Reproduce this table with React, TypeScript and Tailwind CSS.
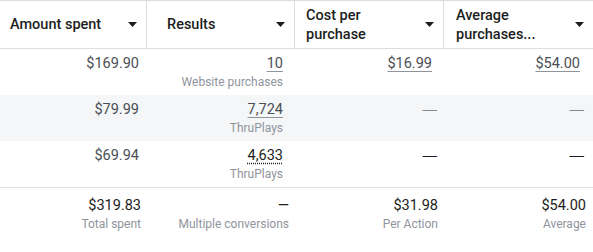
import React from "react";

type Cell = {
  value: string;
  sub?: string;
  line?: "solid" | "dotted";
  dash?: "light" | "dark";
};

const cols = [
  { title: ["Amount spent"], pl: "pl-[10px]" },
  { title: ["Results"], pl: "pl-[20px]" },
  { title: ["Cost per", "purchase"], pl: "pl-[11px]" },
  { title: ["Average", "purchases..."], pl: "pl-[12px]" },
];

const rows: { bg: string; cells: Cell[] }[] = [
  {
    bg: "bg-white",
    cells: [
      { value: "$169.90" },
      { value: "10", sub: "Website purchases", line: "solid" },
      { value: "$16.99", line: "solid" },
      { value: "$54.00", line: "solid" },
    ],
  },
  {
    bg: "bg-[#f5f6f7]",
    cells: [
      { value: "$79.99" },
      { value: "7,724", sub: "ThruPlays", line: "solid" },
      { value: "—", dash: "light" },
      { value: "—", dash: "light" },
    ],
  },
  {
    bg: "bg-white",
    cells: [
      { value: "$69.94" },
      { value: "4,633", sub: "ThruPlays", line: "dotted" },
      { value: "—", dash: "dark" },
      { value: "—", dash: "dark" },
    ],
  },
];

const totals = [
  { value: "$319.83", sub: "Total spent" },
  { value: "—", sub: "Multiple conversions" },
  { value: "$31.98", sub: "Per Action" },
  { value: "$54.00", sub: "Average" },
];

const pr = ["pr-[8px]", "pr-[12px]", "pr-[12px]", "pr-[13px]"];
const prDash = ["pr-[8px]", "pr-[8px]", "pr-[7px]", "pr-[9px]"];
const prTotal = ["pr-[6px]", "pr-[6px]", "pr-[6px]", "pr-[7px]"];

function Caret() {
  return (
    <svg width="9" height="5" viewBox="0 0 9 5" className="shrink-0">
      <path d="M0 0h9L4.5 5z" fill="#1c1e21" />
    </svg>
  );
}

function Value({ cell }: { cell: Cell }) {
  if (cell.dash)
    return (
      <span
        className={`font-['Liberation_Sans'] ${
          cell.dash === "light" ? "text-[#84898f]" : "text-[#1c1e21]"
        }`}
      >
        {cell.value}
      </span>
    );
  let cls = "text-[#4b4f56]";
  if (cell.line === "solid")
    cls = "text-[#4b4f56] underline decoration-[#90949c] underline-offset-[3px]";
  if (cell.line === "dotted")
    cls = "text-[#1c1e21] underline decoration-dotted decoration-[#1c1e21] underline-offset-[3px]";
  return <span className={cls}>{cell.value}</span>;
}

export default function App() {
  return (
    <div
      className="w-[593px] h-[252px] bg-white overflow-hidden"
      style={{ fontFamily: "Roboto, 'Noto Sans', sans-serif" }}
    >
      <div className="grid grid-cols-[147px_148px_149px_149px] border-t border-[#dadde1]">
        {/* header */}
        {cols.map((c, i) => (
          <div
            key={i}
            className={`h-[48px] flex items-center justify-between ${c.pl} pr-[9px] border-b border-[#dadde1] ${
              i < 3 ? "border-r" : ""
            } border-r-[#dadde1]`}
          >
            <div className="text-[14.5px] leading-[19px] font-medium text-[#1c1e21]">
              {c.title.map((t) => (
                <div key={t}>{t}</div>
              ))}
            </div>
            <Caret />
          </div>
        ))}

        {/* rows */}
        {rows.map((r, ri) =>
          r.cells.map((cell, ci) => (
            <div
              key={`${ri}-${ci}`}
              className={`${r.bg} h-[46px] ${cell.dash ? prDash[ci] : pr[ci]} pt-[5px] flex flex-col items-end ${
                ri === rows.length - 1 ? "border-b border-[#dadde1] h-[47px]" : ""
              }`}
            >
              <div className="text-[14.5px] leading-[19px]">
                <Value cell={cell} />
              </div>
              {cell.sub && (
                <div className="text-[12px] leading-[19px] text-[#90949c]">{cell.sub}</div>
              )}
            </div>
          ))
        )}

        {/* totals */}
        {totals.map((t, i) => (
          <div key={i} className={`${prTotal[i]} pt-[8px] flex flex-col items-end`}>
            <div className="text-[14.5px] leading-[19px] text-[#1c1e21]">{t.value}</div>
            <div className="text-[12px] leading-[19px] text-[#90949c]">{t.sub}</div>
          </div>
        ))}
      </div>
    </div>
  );
}
